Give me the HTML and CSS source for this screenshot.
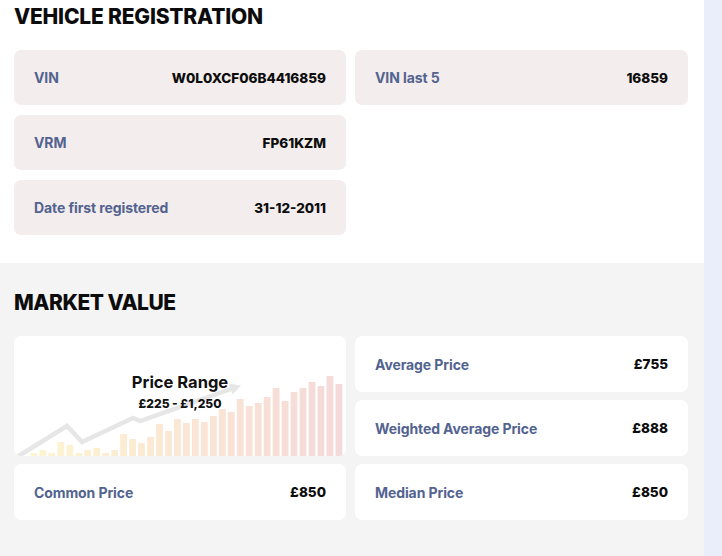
FILE: index.html
```html
<!DOCTYPE html>
<html lang="en">
<head>
<meta charset="utf-8">
<title>Vehicle report</title>
<link rel="stylesheet" href="styles.css">
</head>
<body>
<div class="page">
  <main class="main">
    <section class="section reg">
      <h2 class="heading">VEHICLE REGISTRATION</h2>
      <div class="grid reg-grid">
        <div class="item item-tint"><span class="label">VIN</span><span class="value">W0L0XCF06B4416859</span></div>
        <div class="item item-tint"><span class="label">VIN last 5</span><span class="value">16859</span></div>
        <div class="item item-tint col1"><span class="label">VRM</span><span class="value">FP61KZM</span></div>
        <div class="item item-tint col1"><span class="label">Date first registered</span><span class="value">31-12-2011</span></div>
      </div>
    </section>
    <section class="section market">
      <h2 class="heading">MARKET VALUE</h2>
      <div class="grid market-grid">
        <div class="chart-card">
          <svg class="chart" viewBox="0 0 332 120" width="332" height="120" aria-hidden="true">
            <defs>
              <linearGradient id="barGrad" gradientUnits="userSpaceOnUse" x1="16" y1="0" x2="330" y2="0">
                <stop offset="0" stop-color="#fdf5d0"/>
                <stop offset="0.5" stop-color="#fae6d4"/>
                <stop offset="1" stop-color="#f4d9d9"/>
              </linearGradient>
            </defs>
            <polyline points="3,121 53,90 68,106 119,82 126,85 217,53" fill="none" stroke="#e6e6e6" stroke-width="4.5" stroke-linejoin="miter"/>
            <polygon points="227,49.5 218.6,58.5 214.6,47.6" fill="#e6e6e6"/>
            <g fill="url(#barGrad)">
              <rect x="16.5" y="117" width="6.8" height="3"/>
              <rect x="25.5" y="114" width="6.8" height="6"/>
              <rect x="34.4" y="117" width="6.8" height="3"/>
              <rect x="43.4" y="106" width="6.8" height="14"/>
              <rect x="52.4" y="109" width="6.8" height="11"/>
              <rect x="61.4" y="117" width="6.8" height="3"/>
              <rect x="70.3" y="114" width="6.8" height="6"/>
              <rect x="79.3" y="112" width="6.8" height="8"/>
              <rect x="88.3" y="117" width="6.8" height="3"/>
              <rect x="97.2" y="114" width="6.8" height="6"/>
              <rect x="106.2" y="98" width="6.8" height="22"/>
              <rect x="115.2" y="103" width="6.8" height="17"/>
              <rect x="124.1" y="107" width="6.8" height="13"/>
              <rect x="133.1" y="101" width="6.8" height="19"/>
              <rect x="142.1" y="88" width="6.8" height="32"/>
              <rect x="151.1" y="95" width="6.8" height="25"/>
              <rect x="160.0" y="83" width="6.8" height="37"/>
              <rect x="169.0" y="87" width="6.8" height="33"/>
              <rect x="178.0" y="83" width="6.8" height="37"/>
              <rect x="186.9" y="86" width="6.8" height="34"/>
              <rect x="195.9" y="80" width="6.8" height="40"/>
              <rect x="204.9" y="73" width="6.8" height="47"/>
              <rect x="213.8" y="76" width="6.8" height="44"/>
              <rect x="222.8" y="63" width="6.8" height="57"/>
              <rect x="231.8" y="70" width="6.8" height="50"/>
              <rect x="240.8" y="67" width="6.8" height="53"/>
              <rect x="249.7" y="61" width="6.8" height="59"/>
              <rect x="258.7" y="52" width="6.8" height="68"/>
              <rect x="267.7" y="65" width="6.8" height="55"/>
              <rect x="276.6" y="56" width="6.8" height="64"/>
              <rect x="285.6" y="52" width="6.8" height="68"/>
              <rect x="294.6" y="46" width="6.8" height="74"/>
              <rect x="303.5" y="50" width="6.8" height="70"/>
              <rect x="312.5" y="40" width="6.8" height="80"/>
              <rect x="321.5" y="48" width="6.8" height="72"/>
            </g>
          </svg>
          <div class="chart-text">
            <span class="chart-title">Price Range</span>
            <span class="chart-value">£225 - £1,250</span>
          </div>
        </div>
        <div class="item item-white"><span class="label">Average Price</span><span class="value">£755</span></div>
        <div class="item item-white"><span class="label">Weighted Average Price</span><span class="value">£888</span></div>
        <div class="item item-white"><span class="label">Common Price</span><span class="value">£850</span></div>
        <div class="item item-white"><span class="label">Median Price</span><span class="value">£850</span></div>
      </div>
    </section>
  </main>
</div>
</body>
</html>
```

FILE: styles.css
```css
* { box-sizing: border-box; }

html, body {
  margin: 0;
  padding: 0;
}

body {
  background: #e9eefa;
  font-family: Inter, "Noto Sans", "Liberation Sans", sans-serif;
  color: #111111;
}

.page {
  display: flex;
  min-height: 556px;
}

.main {
  width: 704px;
  display: flex;
  flex-direction: column;
  min-height: 556px;
}

.section {
  padding-left: 14px;
  padding-right: 16px;
}

.reg {
  background: #ffffff;
  padding-top: 4px;
  padding-bottom: 28px;
}

.market {
  background: #f4f4f4;
  flex: 1;
  padding-top: 27px;
}

.heading {
  margin: 0;
  font-size: 21px;
  line-height: 26px;
  font-weight: 800;
  letter-spacing: -0.2px;
  color: #0c0c0c;
}

.market .heading {
  letter-spacing: -0.5px;
}

.grid {
  display: grid;
  grid-template-columns: 332px 333px;
  column-gap: 9px;
}

.reg-grid {
  margin-top: 20px;
  row-gap: 10px;
  grid-auto-rows: 55px;
}

.market-grid {
  margin-top: 20px;
  row-gap: 8px;
  grid-auto-rows: 56px;
}

.col1 { grid-column: 1; }

.item {
  display: flex;
  align-items: center;
  justify-content: space-between;
  padding: 0 20px;
  border-radius: 7px;
}

.item-tint { background: #f3eded; }
.item-white { background: #ffffff; }

.label {
  font-size: 14px;
  font-weight: 700;
  color: #53638f;
  letter-spacing: -0.1px;
}

.value {
  font-size: 13.5px;
  font-weight: 800;
  color: #0d0d0d;
}

.chart-card {
  grid-row: span 2;
  position: relative;
  overflow: hidden;
  background: #ffffff;
  border-radius: 7px;
  display: flex;
  flex-direction: column;
  align-items: center;
  justify-content: center;
}

.chart {
  position: absolute;
  left: 0;
  top: 0;
  width: 100%;
  height: 100%;
}

.chart-text {
  position: relative;
  display: flex;
  flex-direction: column;
  align-items: center;
  margin-bottom: 10px;
}

.chart-title {
  font-size: 16.5px;
  line-height: 22px;
  font-weight: 700;
  color: #111111;
}

.chart-value {
  margin-top: 3px;
  font-size: 12px;
  line-height: 16px;
  font-weight: 800;
  color: #111111;
}
```
